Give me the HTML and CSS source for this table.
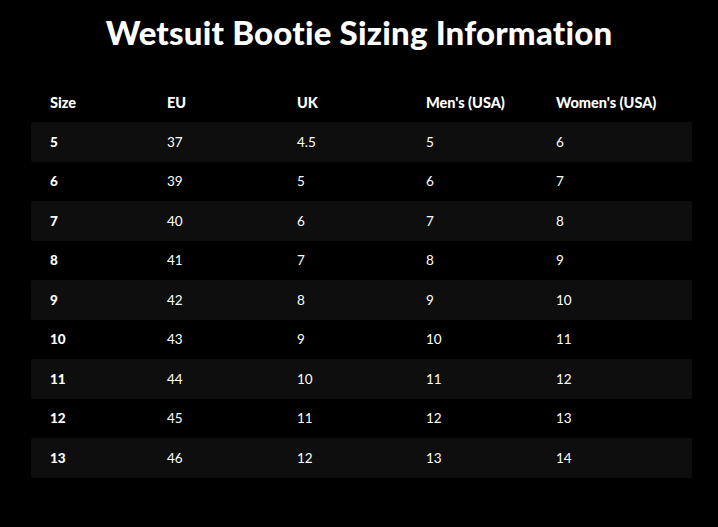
FILE: index.html
```html
<!DOCTYPE html>
<html>
<head>
<meta charset="utf-8">
<link rel="stylesheet" href="styles.css">
</head>
<body>
<div class="page">
  <h1 class="title">Wetsuit Bootie Sizing Information</h1>
  <table class="sizes">
    <colgroup>
      <col class="c1"><col class="c2"><col class="c3"><col class="c4"><col class="c5">
    </colgroup>
    <thead>
      <tr><th>Size</th><th>EU</th><th>UK</th><th>Men's (USA)</th><th>Women's (USA)</th></tr>
    </thead>
    <tbody>
      <tr><td class="sz">5</td><td>37</td><td>4.5</td><td>5</td><td>6</td></tr>
      <tr><td class="sz">6</td><td>39</td><td>5</td><td>6</td><td>7</td></tr>
      <tr><td class="sz">7</td><td>40</td><td>6</td><td>7</td><td>8</td></tr>
      <tr><td class="sz">8</td><td>41</td><td>7</td><td>8</td><td>9</td></tr>
      <tr><td class="sz">9</td><td>42</td><td>8</td><td>9</td><td>10</td></tr>
      <tr><td class="sz">10</td><td>43</td><td>9</td><td>10</td><td>11</td></tr>
      <tr><td class="sz">11</td><td>44</td><td>10</td><td>11</td><td>12</td></tr>
      <tr><td class="sz">12</td><td>45</td><td>11</td><td>12</td><td>13</td></tr>
      <tr><td class="sz">13</td><td>46</td><td>12</td><td>13</td><td>14</td></tr>
    </tbody>
  </table>
</div>
</body>
</html>
```
FILE: styles.css
```css
html, body {
  margin: 0;
  padding: 0;
  background: #000;
}
.page {
  width: 718px;
  height: 527px;
  background: #000;
  color: #fff;
  font-family: "Lato", "Open Sans", sans-serif;
  overflow: hidden;
}
.title {
  margin: 0;
  padding-top: 12px;
  height: 41px;
  line-height: 41px;
  text-align: center;
  font-size: 33px;
  font-weight: 900;
  letter-spacing: 0.2px;
}
.sizes {
  margin: 29px 0 0 31px;
  width: 661px;
  border-collapse: separate;
  border-spacing: 0;
  table-layout: fixed;
  font-size: 13.5px;
}
.c1 { width: 117px; }
.c2 { width: 130px; }
.c3 { width: 129px; }
.c4 { width: 130px; }
.c5 { width: 155px; }
.sizes th, .sizes td {
  text-align: left;
  padding: 0 0 0 19px;
  height: 39.5px;
  box-sizing: border-box;
  white-space: nowrap;
}
.sizes th {
  font-weight: 900;
  font-size: 14.5px;
  height: 40px;
}
.sizes td {
  font-weight: 400;
}
.sizes td.sz {
  font-weight: 900;
}
.sizes tbody tr:nth-child(odd) td {
  background: #0e0e0e;
}
.sizes tbody tr:nth-child(odd) td:first-child {
  border-radius: 2px 0 0 2px;
}
.sizes tbody tr:nth-child(odd) td:last-child {
  border-radius: 0 2px 2px 0;
}
```
